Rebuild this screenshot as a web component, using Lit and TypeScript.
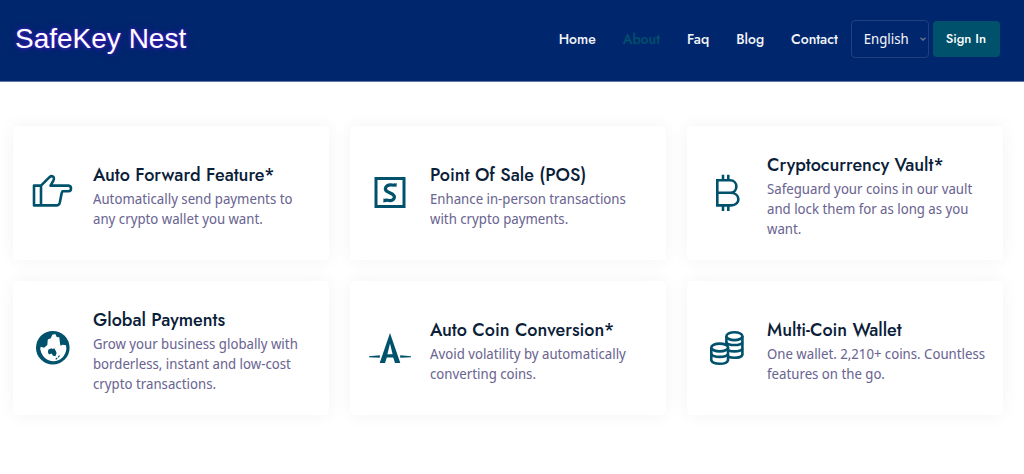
import { LitElement, html, css, svg } from "lit";
import { customElement } from "lit/decorators.js";
import { classMap } from "lit/directives/class-map.js";

const links = ["Home", "About", "Faq", "Blog", "Contact"];

const hand = svg`<path fill="none" stroke="currentColor" stroke-width="2.6" stroke-linejoin="round"
  d="M1 12.6H8V32.4H1ZM8 12.6L16.5 4.2Q19 2 20.7 4.2Q21.5 6 20.2 8L17.5 12.6H35.5Q38 13 38 15.5Q38 18.2 35.5 18.2H29.5L28.7 20L26.7 30Q26 32.4 23.5 32.4H8"/>`;
const pos = svg`<rect x="6" y="5.5" width="28" height="28" fill="none" stroke="currentColor" stroke-width="3"/>
<path d="M25.6 11.6C23.6 13.2 22.6 11.6 20.4 11.8C15.4 12.2 14 16.2 17 18.4L22.6 21.2C26 23.8 24 27.4 20 27.7C17.6 27.8 16.6 26 14.4 28" fill="none" stroke="currentColor" stroke-width="3.2"/>
<path d="M23.6 10.8L26.9 10.2L26.2 14.6ZM16.6 28.8L13.2 29.4L13.8 25Z" fill="currentColor"/>`;
const bitcoin = svg`<g fill="none" stroke="currentColor" stroke-width="2.6">
  <path d="M10.3 7.3H23C31.5 7.3 31.5 19.8 23 19.8H10.3M23 19.8C34 19.8 34 32.4 24 32.4H10.3M10.3 6V33.7"/>
  <path d="M16 1.7V7M21.3 1.7V7M16 33V38M21.3 33V38"/>
</g>`;
const globe = svg`<circle cx="19.8" cy="19.7" r="16.8" fill="currentColor"/>
<path fill="#fff" d="M7.7 18.7L11 19.7L14.3 17L14.8 11.5L17.8 10.2L19.3 6.8L22.3 6L23.7 9L26.3 9.3L27 15.5L27.6 17.8L29.7 16.8L33 17.2L33.4 21C32.5 28 27.5 33.3 20.3 33.3C14.8 33 10.2 29.5 8.2 24.5L7.2 21Z"/>
<path fill="currentColor" d="M15.4 21.5L18.6 20.2L20 21.3L21 20L22.6 22.6L23.6 25L22.4 28.2L20 27.7L18.6 25.5L16 26.4L14.9 24.2Z"/>
<path d="M26.5 27.5L25.2 29.3M24.2 29.8L22.8 31.4" stroke="currentColor" stroke-width="1.2"/>`;
const compass = svg`<path fill="currentColor" fill-rule="evenodd" d="M20 5L30.3 35H25L23.2 29.4H16.8L15 35H9.7ZM20 15.5L17.4 26.3H22.6Z"/>
<path fill="currentColor" d="M-1 28.2L9.8 27.2V29.8L-1 29.2ZM41 28.2L30.2 27.2V29.8L41 29.2Z"/>`;
const coins = svg`<g stroke="currentColor" stroke-width="2.6" fill="#fff">
  <path d="M19.4 8V26.7C20.9 30.7 34 30.7 35.4 26.7V8"/>
  <ellipse cx="27.4" cy="8.2" rx="8" ry="3.9"/>
  <path fill="none" d="M19.4 14.2C20.9 18 34 18 35.4 14.2M19.4 20.5C20.9 24.3 34 24.3 35.4 20.5"/>
  <path d="M4.3 19.5V32.3C6 36.9 19.5 36.9 21 32.3V19.5"/>
  <ellipse cx="12.7" cy="19.5" rx="8.4" ry="3.9"/>
  <path fill="none" d="M4.3 26C6 29.8 19.5 29.8 21 26"/>
</g>`;

const features = [
  { icon: hand, title: "Auto Forward Feature*", text: "Automatically send payments to any crypto wallet you want." },
  { icon: pos, title: "Point Of Sale (POS)", text: "Enhance in-person transactions with crypto payments." },
  { icon: bitcoin, title: "Cryptocurrency Vault*", text: "Safeguard your coins in our vault and lock them for as long as you want." },
  { icon: globe, title: "Global Payments", text: "Grow your business globally with borderless, instant and low-cost crypto transactions." },
  { icon: compass, title: "Auto Coin Conversion*", text: "Avoid volatility by automatically converting coins." },
  { icon: coins, title: "Multi-Coin Wallet", text: "One wallet. 2,210+ coins. Countless features on the go." },
];

@customElement("app-root")
export class AppRoot extends LitElement {
  static styles = css`
    :host {
      display: block;
      min-height: 100vh;
      background: #fff;
      font-family: "Noto Sans Display", "Noto Sans", "Open Sans", sans-serif;
      font-size: 14px;
      color: #6b6592;
    }
    * { box-sizing: border-box; }
    .header {
      display: flex;
      align-items: center;
      justify-content: space-between;
      padding: 20px 24px 23px 15px;
      background: #00266d;
      border-bottom: 1px solid #6076a8;
    }
    .brand {
      font: 28px/38px "Liberation Sans", Arial, sans-serif;
      color: #fff;
      text-decoration: none;
      text-shadow: 0 0 3px #5a20e0, 0 0 7px #3414a8;
    }
    .right { display: flex; align-items: center; }
    .nav { display: flex; gap: 27px; margin-right: 13px; }
    .link {
      font: 500 14px/20px Jost, Lato, sans-serif;
      color: #f3f5fa;
      text-decoration: none;
    }
    .link.active { color: #00516c; }
    .language { display: grid; align-items: center; margin-right: 4px; }
    .select {
      grid-area: 1 / 1;
      appearance: none;
      width: 78px;
      height: 38px;
      padding: 0 12px;
      border: 1px solid #1f417f;
      border-radius: 4px;
      background: transparent;
      color: #f3f5fa;
      font-family: inherit;
      font-size: 14px;
      line-height: 20px;
    }
    .chevron {
      grid-area: 1 / 1;
      justify-self: end;
      width: 6px;
      height: 4px;
      margin-right: 3px;
      color: #6b7590;
      pointer-events: none;
    }
    .sign-in {
      height: 36px;
      padding: 0 14px 0 13px;
      border: 0;
      border-radius: 4px;
      background: #00516c;
      color: #fff;
      font: 500 13px/20px Jost, Lato, sans-serif;
    }
    .grid {
      display: grid;
      grid-template-columns: repeat(3, 1fr);
      gap: 21px;
      padding: 44px 21px 44px 13px;
    }
    .card {
      display: flex;
      align-items: center;
      gap: 20px;
      min-height: 134px;
      padding: 20px 14px 20px 20px;
      border-radius: 4px;
      background: #fff;
      box-shadow: 0 0 18px rgba(0, 0, 0, 0.05);
    }
    .icon {
      flex: none;
      width: 40px;
      height: 40px;
      overflow: visible;
      color: #00516c;
    }
    .body { padding-top: 4px; }
    .title {
      margin: 0;
      font: 500 18px/28px Jost, Lato, sans-serif;
      color: #0a2038;
    }
    .text { margin: 0; line-height: 20px; }
    @media (max-width: 900px) {
      .grid { grid-template-columns: 1fr 1fr; }
      .header { flex-wrap: wrap; }
    }
    @media (max-width: 600px) {
      .grid { grid-template-columns: 1fr; }
      .right, .nav { flex-wrap: wrap; }
    }
  `;

  render() {
    return html`
      <header class="header">
        <a class="brand" href="#">SafeKey Nest</a>
        <div class="right">
          <nav class="nav">
            ${links.map((name) => html`<a href="#" class=${classMap({ link: true, active: name === "About" })}>${name}</a>`)}
          </nav>
          <div class="language">
            <select class="select" aria-label="Language"><option>English</option></select>
            <svg class="chevron" viewBox="0 0 6 4" aria-hidden="true"><path d="M.5 .7L3 3L5.5 .7" fill="none" stroke="currentColor" stroke-width="1.3"/></svg>
          </div>
          <button class="sign-in" type="button">Sign In</button>
        </div>
      </header>
      <main class="grid">
        ${features.map((f) => html`
          <article class="card">
            <svg class="icon" viewBox="0 0 40 40" aria-hidden="true">${f.icon}</svg>
            <div class="body">
              <h2 class="title">${f.title}</h2>
              <p class="text">${f.text}</p>
            </div>
          </article>
        `)}
      </main>
    `;
  }
}
